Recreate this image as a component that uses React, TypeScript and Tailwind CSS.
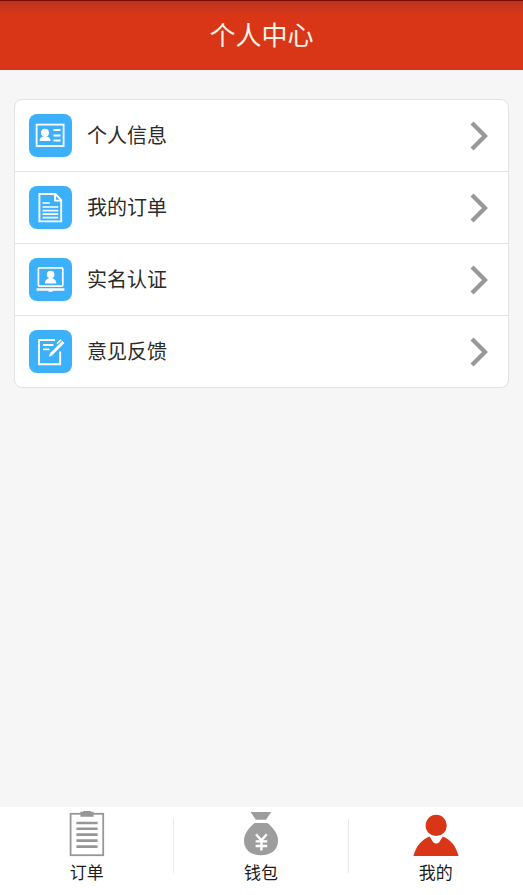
import React, { useState } from 'react';

const InfoIcon = () => (
  <svg viewBox="0 0 43 43" className="w-full h-full" fill="none" stroke="#fff" strokeWidth="1.8">
    <rect x="7.6" y="10.6" width="27" height="21.4" />
    <circle cx="16" cy="18.8" r="4" fill="#fff" stroke="none" />
    <path d="M10.6 27c0-3 1.4-4 3.6-4.6v-2h3.6v2c2.2.6 3.8 1.6 3.8 4.6z" fill="#fff" stroke="none" />
    <path d="M24.5 16h7M24.5 21.4h7M24.5 26.6h7" strokeWidth="2" />
  </svg>
);

const OrderIcon = () => (
  <svg viewBox="0 0 43 43" className="w-full h-full" fill="none" stroke="#fff" strokeWidth="1.9">
    <path d="M10.4 8h16l5.8 6.2v21.2H10.4z" />
    <path d="M26 8v6.6h6" />
    <path d="M13.5 17h7.2M13.5 21h15.8M13.5 24.6h15.8M13.5 28.2h15.8M13.5 31.6h15.8" strokeWidth="1.7" />
  </svg>
);

const VerifyIcon = () => (
  <svg viewBox="0 0 43 43" className="w-full h-full" fill="none" stroke="#fff" strokeWidth="1.7">
    <rect x="9.4" y="9.9" width="24.4" height="18.2" rx="1" />
    <circle cx="21.6" cy="16.6" r="3.8" fill="#fff" stroke="none" />
    <path d="M15.8 25.4c.2-3 1.8-4.4 4-5.1v-2h3.6v2c2.2.7 3.8 2.1 4 5.1z" fill="#fff" stroke="none" />
    <path d="M7.6 30.3h27.8v2.4H24.2l-1 1h-3.4l-1-1H7.6z" fill="#fff" stroke="none" />
  </svg>
);

const FeedbackIcon = () => (
  <svg viewBox="0 0 43 43" className="w-full h-full" fill="none" stroke="#fff" strokeWidth="1.9">
    <path d="M26 10H10v24.2h21.2V21.6" />
    <path d="M14 15h10.4M14 19.4h6.4" strokeWidth="1.8" />
    <path d="M22.4 24L34.4 12" strokeWidth="3" />
    <path d="M21.2 22.6l2.6 2.6-4 1.6z" fill="#fff" stroke="none" />
    <path d="M28 13.6l4.2-4" strokeWidth="1.5" />
  </svg>
);

const ClipboardIcon = () => (
  <svg viewBox="0 0 46 46" className="w-[46px] h-[46px]" fill="none" stroke="#979797">
    <rect x="6.6" y="2.8" width="32.6" height="41.4" strokeWidth="1.8" />
    <path d="M16.4.8h2.8V0h7.6v.8h2.8v5H16.4z" fill="#979797" stroke="none" />
    <path d="M12.4 12h21.2M12.4 17.8h21.2M12.4 23.6h21.2M12.4 29.6h21.2M12.4 35.6h21.2" strokeWidth="2.6" />
  </svg>
);

const WalletIcon = () => (
  <svg viewBox="0 0 46 46" className="w-[46px] h-[46px]" fill="#9d9d9d">
    <path d="M12.6 1h20.6L28 8.8H17.8z" />
    <path d="M16.8 12h12.4c5.4 4 10.8 10.6 10.8 17.4 0 9.4-7 14.8-17 14.8S6 38.8 6 29.4C6 22.6 11.4 16 16.8 12z" />
    <path d="M18 23.2l5.4 6.2 5.4-6.2M17.6 30.4h11.6M17.6 35h11.6M23.4 29.4v10.2" fill="none" stroke="#fff" strokeWidth="2.4" />
  </svg>
);

const PersonIcon = () => (
  <svg viewBox="0 0 46 46" className="w-[46px] h-[46px]" fill="#d93618">
    <circle cx="23.2" cy="14.4" r="10.6" />
    <path d="M.4 45C3 35.4 8.6 28.6 16.6 25.6l3.6 5.6c1.6 1.6 4.400 1.6 6 0l3.600-5.600C37.800 28.600 43 35.400 45.600 45z" />
  </svg>
);

const MENU = [
  { id: 'info', title: '个人信息', icon: <InfoIcon /> },
  { id: 'orders', title: '我的订单', icon: <OrderIcon /> },
  { id: 'verify', title: '实名认证', icon: <VerifyIcon /> },
  { id: 'feedback', title: '意见反馈', icon: <FeedbackIcon /> },
];

const TABS = [
  { id: 'order', title: '订单', icon: <ClipboardIcon /> },
  { id: 'wallet', title: '钱包', icon: <WalletIcon /> },
  { id: 'mine', title: '我的', icon: <PersonIcon /> },
];

export default function App() {
  const [activeTab, setActiveTab] = useState('mine');

  return (
    <div className="min-h-screen flex flex-col bg-[#f6f6f6] text-[#2b2b2b] font-['Liberation_Sans','Noto_Sans_CJK_SC',sans-serif]">
      <header className="h-[70px] flex items-center justify-center border-t border-[#7d0a04] bg-linear-to-b from-[#b9341f] to-[#d93618] to-[14px]">
        <h1 className="text-[26px] leading-8 text-[#fff3e6]">个人中心</h1>
      </header>

      <main className="flex-1 px-[14px] pt-[29px]">
        <ul className="bg-white border border-[#e2e2e2] rounded-lg overflow-hidden divide-y divide-[#e2e2e2]">
          {MENU.map(item => (
            <li key={item.id}>
              <button className="w-full h-[71px] flex items-center gap-[15px] pl-[14px] pr-5 text-left">
                <span className="w-[43px] h-[43px] shrink-0 rounded-lg bg-[#3db0fc]">{item.icon}</span>
                <span className="flex-1 text-xl leading-7">{item.title}</span>
                <svg viewBox="0 0 18 30" className="w-[18px] h-[30px]" fill="none" stroke="#999" strokeWidth="4.4">
                  <path d="M2 2l13 13L2 28" />
                </svg>
              </button>
            </li>
          ))}
        </ul>
      </main>

      <nav className="h-[88px] grid grid-cols-3 bg-white">
        {TABS.map((tab, i) => (
          <button
            key={tab.id}
            onClick={() => setActiveTab(tab.id)}
            aria-current={activeTab === tab.id ? 'page' : undefined}
            className="flex"
          >
            <span className="flex-1 flex flex-col items-center pt-1">
              {tab.icon}
              <span className="text-[17px] leading-6 pt-[5px] text-[#1c1c1c]">{tab.title}</span>
            </span>
            {i < TABS.length - 1 && <span className="w-px h-[54px] mt-3 bg-[#e9e9e9]" />}
          </button>
        ))}
      </nav>
    </div>
  );
}
